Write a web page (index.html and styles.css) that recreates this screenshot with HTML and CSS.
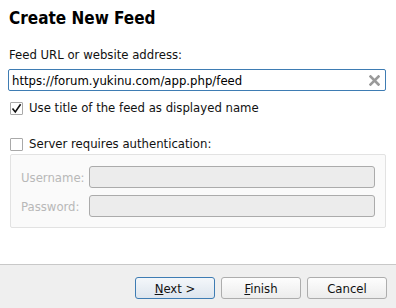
FILE: index.html
```html
<!DOCTYPE html>
<html lang="en">
<head>
    <meta charset="UTF-8">
    <title>Create New Feed</title>
    <link rel="stylesheet" href="styles.css">
</head>
<body>
    <div class="dialog">
        <div class="content">
            <h1>Create New Feed</h1>

            <label class="field-label">Feed URL or website address:</label>
            <div class="url-input">
                <span>https://forum.yukinu.com/app.php/feed</span>
                <svg class="clear" width="11" height="11" viewBox="0 0 11 11">
                    <path d="M1.5 1.5 L9.5 9.5 M9.5 1.5 L1.5 9.5" stroke="#9a9a9a" stroke-width="2.6" stroke-linecap="square"/>
                </svg>
            </div>

            <div class="check-row first">
                <span class="box">
                    <svg width="11" height="11" viewBox="0 0 11 11">
                        <path d="M1.5 5.5 L4.3 9 L9.6 1.2" fill="none" stroke="#111" stroke-width="1.6"/>
                    </svg>
                </span>
                Use title of the feed as displayed name
            </div>

            <div class="check-row second">
                <span class="box"></span>
                Server requires authentication:
            </div>

            <div class="auth-group">
                <div class="auth-row">
                    <span class="auth-label">Username:</span>
                    <div class="auth-input"></div>
                </div>
                <div class="auth-row">
                    <span class="auth-label">Password:</span>
                    <div class="auth-input"></div>
                </div>
            </div>
        </div>

        <div class="footer">
            <button class="btn primary"><u>N</u>ext &gt;</button>
            <button class="btn"><u>F</u>inish</button>
            <button class="btn">Cancel</button>
        </div>
    </div>
</body>
</html>
```

FILE: styles.css
```css
body {
    margin: 0;
    padding: 0;
    background-color: #ffffff;
    font-family: "DejaVu Sans Condensed", "DejaVu Sans", sans-serif;
    font-size: 13px;
    color: #111;
}
.dialog {
    width: 396px;
    height: 308px;
    display: flex;
    flex-direction: column;
}
.content {
    flex: 1;
    padding: 8px 10px 0 9px;
}
h1 {
    margin: 0;
    font-size: 17px;
    font-weight: bold;
    line-height: 21px;
    color: #000;
}
.field-label {
    display: block;
    margin-top: 19px;
    line-height: 14px;
}
.url-input {
    margin-top: 7px;
    margin-left: -1px;
    height: 20px;
    border: 1px solid #3e7cb3;
    border-radius: 2px;
    display: flex;
    align-items: center;
    padding: 0 5px 0 3px;
    justify-content: space-between;
    color: #000;
}
.check-row {
    display: flex;
    align-items: center;
    line-height: 14px;
}
.check-row.first {
    margin-top: 10px;
}
.check-row.second {
    margin-top: 22px;
}
.box {
    width: 11px;
    height: 11px;
    border: 1px solid #a9a9a9;
    border-radius: 1px;
    background: #fff;
    margin-left: 1px;
    margin-right: 6px;
    display: flex;
}
.auth-group {
    margin-top: 3px;
    margin-left: 1px;
    height: 74px;
    border: 1px solid #e2e2e2;
    border-radius: 2px;
    background: #fafafa;
    padding: 11px 10px 0 10px;
    box-sizing: border-box;
}
.auth-row {
    display: flex;
    align-items: center;
    margin-bottom: 7px;
}
.auth-label {
    width: 68px;
    color: #b8b8b8;
}
.auth-input {
    flex: 1;
    height: 20px;
    border: 1px solid #ababab;
    border-radius: 3px;
    background: #ececec;
}
.footer {
    height: 44px;
    border-top: 1px solid #c8c8c8;
    background: #efefef;
    display: flex;
    justify-content: flex-end;
    align-items: flex-start;
    gap: 6px;
    padding: 12px 9px 0 0;
    box-sizing: border-box;
}
.btn {
    width: 80px;
    height: 22px;
    font-family: "DejaVu Sans Condensed", "DejaVu Sans", sans-serif;
    font-size: 13px;
    color: #111;
    border: 1px solid #adadad;
    border-radius: 3px;
    background: linear-gradient(#fdfdfd, #ececec);
    padding: 0;
}
.btn.primary {
    border-color: #3e7cb3;
    background: linear-gradient(#f4f7fa, #dde5ee);
}
```
